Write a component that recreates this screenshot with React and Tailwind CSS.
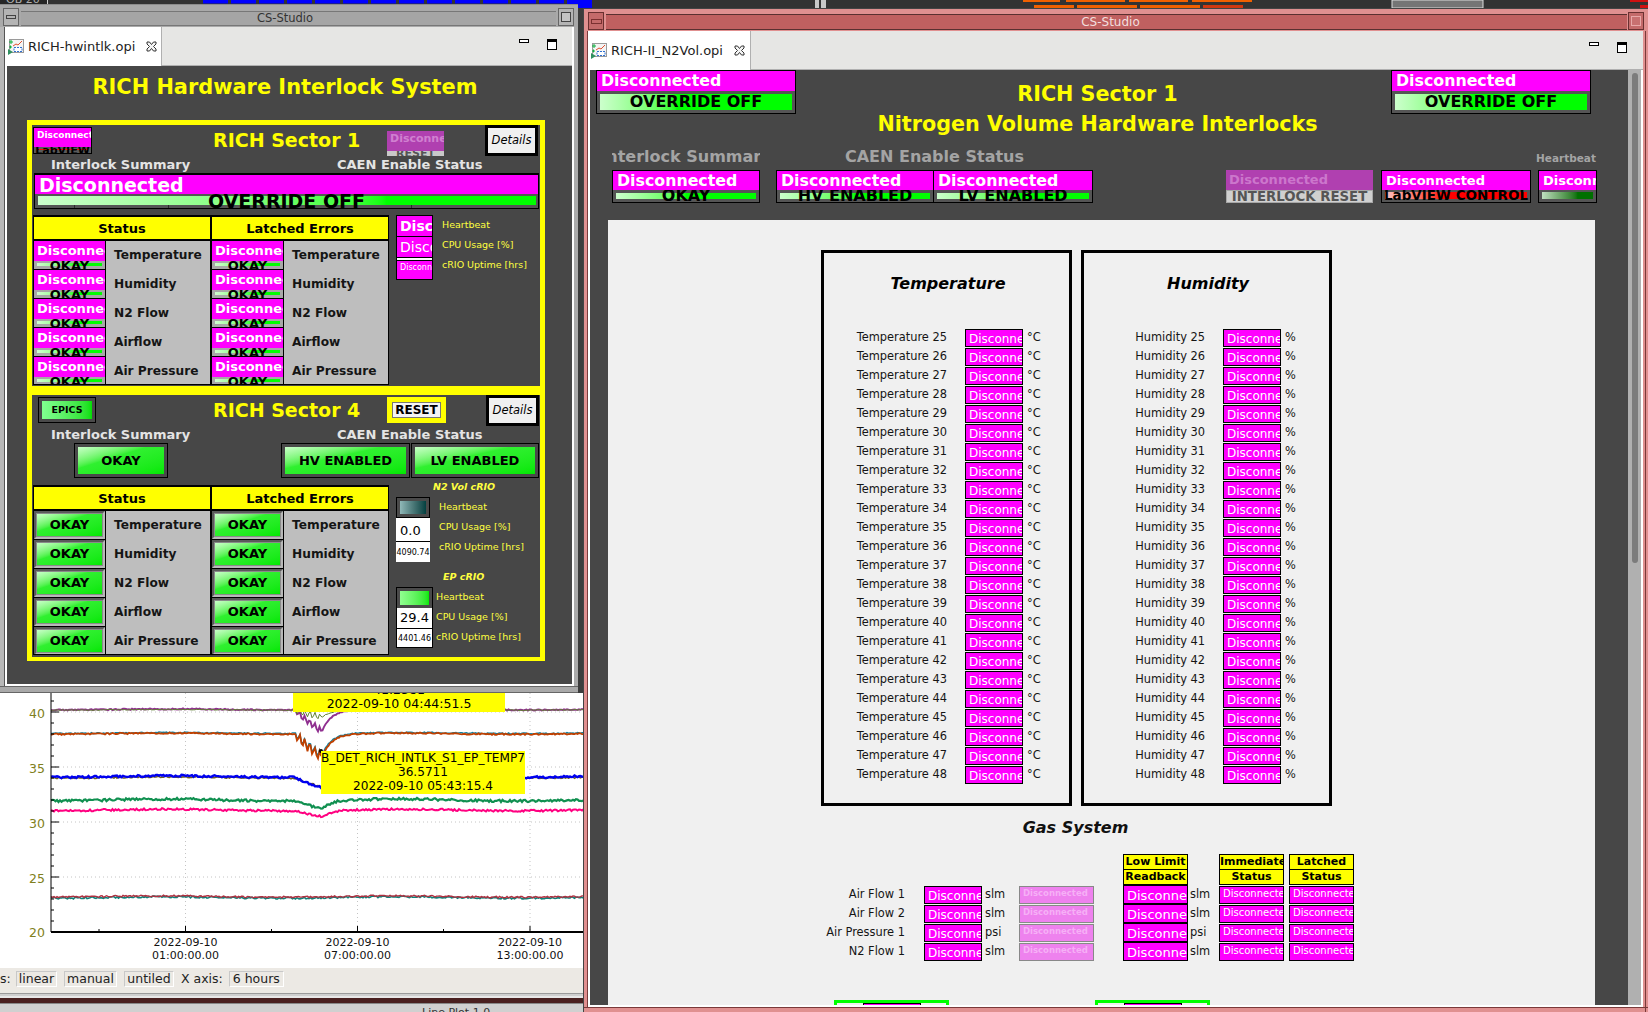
import React from 'react';

// Cropped plot of some other window peeking out above the CS-Studio windows
function TopStrip() {
    const blue = [];
    for (let x = 203; x < 560; x += 28) blue.push(x);
    return (
        <svg className="absolute left-0 top-0" width="1648" height="8" viewBox="0 0 1648 8">
            <rect x="0" y="0" width="1648" height="8" fill="#333333" />
            <rect x="0" y="0" width="47" height="8" fill="#262626" />
            <rect x="47" y="0" width="1" height="8" fill="#cfcfcf" />
            <text x="6" y="3" fontSize="11" fill="#b0b0b0" fontFamily="DejaVu Sans">OB 20</text>
            {blue.map(x => <rect key={x} x={x} y="0" width="25" height="3.5" fill="#0000ff" />)}
            <rect x="567" y="0" width="25" height="8" fill="#0000ff" />
            <rect x="815" y="0" width="4" height="8" fill="#c8c8c8" />
            <rect x="821" y="0" width="5" height="8" fill="#c8c8c8" />
            {[[1023, 37], [1066, 59], [1129, 59], [1192, 60]].map(([x, w]) => <rect key={x} x={x} y="0" width={w} height="2" fill="#f06000" />)}
            {[[1034, 40], [1077, 60], [1140, 60]].map(([x, w]) => <rect key={x} x={x} y="5" width={w} height="3" fill="#f06000" />)}
            <rect x="1203" y="5" width="40" height="3" fill="#d03810" />
            <rect x="1392" y="0" width="91" height="8" fill="#757575" stroke="#dddddd" />
            <rect x="1630" y="0" width="18" height="2" fill="#d01010" />
            <rect x="1640" y="5" width="8" height="3" fill="#d01010" />
        </svg>
    );
}

function TabIcon() {
    return (
        <svg width="16" height="16" viewBox="0 0 16 16" className="shrink-0">
            <rect x="1.5" y="0.5" width="14" height="13" fill="#f4f4f4" stroke="#9a9a9a" />
            <path d="M5 7 L8 5 L10 6 L14 2" fill="none" stroke="#e05030" strokeWidth="1" />
            <path d="M1 3 h4 M3 1 v4 M1 8 h3 M2.500 6.500 v3" stroke="#10b040" strokeWidth="1" />
            <rect x="6" y="8.500" width="8" height="4" fill="#ffffff" stroke="#3070d0" strokeDasharray="2 1" />
            <path d="M0 10 L5 13 L0 16 Z" fill="#309060" />
        </svg>
    );
}

function CloseIcon() {
    return (
        <svg width="11" height="11" viewBox="0 0 11 11" className="shrink-0">
            <path d="M1 1 H3.500 L5.500 3.500 L7.500 1 H10 V3 L7.500 5.500 L10 8 V10 H7.500 L5.500 7.500 L3.500 10 H1 V8 L3.500 5.500 L1 3 Z" fill="#f4f4f4" stroke="#333333" strokeWidth="1" />
        </svg>
    );
}

function MinMax({ minClass, maxClass }) {
    return (
        <>
            <div className={`border-[1.5px] border-black bg-white w-[10px] h-[4px] ${minClass}`} />
            <div className={`border-[1.5px] border-t-[3px] border-black bg-white w-[10px] h-[11px] ${maxClass}`} />
        </>
    );
}

// Magenta "Disconnected" label with a clipped widget underneath, as BOY draws a disconnected PV
function Status({ className, topClass, barClass, fillClass, textClass, text, label = 'Disconnected', children }) {
    return (
        <div className={`flex flex-col overflow-hidden ${className}`}>
            <div className={`overflow-hidden whitespace-nowrap ${topClass}`}>{label}</div>
            <div className={`relative flex items-center justify-center overflow-hidden ${barClass}`}>
                <div className={`absolute ${fillClass}`} />
                {children}
                <span className={`relative font-bold leading-none whitespace-nowrap ${textClass}`}>{text}</span>
            </div>
        </div>
    );
}

function GreenButton({ className, text }) {
    return (
        <div className={`flex items-center justify-center bg-[#4a4a4a] border border-black ${className}`}>
            <div className="w-full h-full bg-linear-to-br from-[#c8ffc8] via-[#30f030] via-40% to-[#00e800] flex items-center justify-center">
                <span className="font-bold text-black whitespace-nowrap text-[13px]">{text}</span>
            </div>
        </div>
    );
}

const interlocks = ['Temperature', 'Humidity', 'N2 Flow', 'Airflow', 'Air Pressure'];

function ErrorColumn({ title, disconnected }) {
    return (
        <div className="w-[176px] flex flex-col">
            <div className="h-[23px] bg-[#ffff00] border-b border-black text-center text-[13px] leading-[23px] font-bold text-black">{title}</div>
            <div className="h-px bg-black" />
            {interlocks.map((name, i) => (
                <div key={name} className={`flex bg-[#bebebe] ${i === 4 ? 'h-[27px]' : 'h-[29px]'}`}>
                    <div className="w-[72px] shrink-0 bg-black border-r border-black overflow-hidden">
                        {disconnected ? (
                            <Status
                                className="h-[28px]"
                                topClass="h-[20px] bg-[#ff00ff] text-white font-bold text-[13px] leading-[20px] pl-[3px]"
                                barClass="h-[8px] bg-[#a8a8a8]"
                                fillClass="left-[3px] right-[3px] top-[2px] h-[3px] bg-linear-to-r from-[#d0ffd0] to-[#00ff00] to-60%"
                                textClass="text-[13px] text-black"
                                text="OKAY"
                            />
                        ) : (
                            <div className="h-[28px] border-2 border-t-[#5a5a5a] border-l-[#5a5a5a] border-b-[#b8b8b8] border-r-[#b8b8b8] bg-[#8a8a8a] p-[1px]">
                                <div className="w-full h-full bg-linear-to-br from-[#c8ffc8] via-[#30f030] via-40% to-[#00e800] flex items-center justify-center">
                                    <span className="font-bold text-black text-[13px]">OKAY</span>
                                </div>
                            </div>
                        )}
                    </div>
                    <div className="pl-[8px] pt-[5px] text-[12.200px] leading-[18px] font-bold text-[#151515] whitespace-nowrap">{name}</div>
                </div>
            ))}
        </div>
    );
}

function ErrorTable({ disconnected }) {
    return (
        <div className="w-[356px] flex gap-[2px] bg-black pt-[2px] px-[1px] pb-[1px] shrink-0">
            <ErrorColumn title="Status" disconnected={disconnected} />
            <ErrorColumn title="Latched Errors" disconnected={disconnected} />
        </div>
    );
}

function DetailsButton() {
    return (
        <div className="w-[53px] h-[31px] border-[3px] border-black bg-[#f0f0f0] flex items-center justify-center text-[11.500px] italic text-black">Details</div>
    );
}

function SmallLabels({ className }) {
    return (
        <div className={`flex flex-col text-[9.500px] text-[#ffff40] whitespace-nowrap ${className}`}>
            <div className="h-[20px] leading-[20px]">Heartbeat</div>
            <div className="h-[20px] leading-[20px]">CPU Usage [%]</div>
            <div className="h-[20px] leading-[20px]">cRIO Uptime [hrs]</div>
        </div>
    );
}

function SectionHeading({ className, children }) {
    return <div className={`text-[#ffff00] text-[19px] font-bold leading-[30px] whitespace-nowrap ${className}`}>{children}</div>;
}

function SectionLabels() {
    return (
        <div className="flex h-[14px] text-[13px] leading-[16px] font-bold text-[#e4e4e4] whitespace-nowrap">
            <div className="ml-[19px] w-[286px]">Interlock Summary</div>
            <div>CAEN Enable Status</div>
        </div>
    );
}

function SectorOne() {
    return (
        <div className="h-[261px] bg-[#474747] overflow-hidden">
            <div className="flex items-start h-[32px]">
                <Status
                    className="ml-[1px] mt-[2px] w-[59px] h-[27px] border border-black"
                    topClass="h-[20px] bg-[#ff00ff] text-white font-bold text-[9px] leading-[14px] pl-[3px]"
                    barClass="h-[6px] bg-[#5a5a5a]"
                    fillClass="left-[3px] right-[3px] top-[2px] h-[1px] bg-[#ff0000]"
                    textClass="text-[11px] text-black"
                    text="LabVIEW"
                />
                <SectionHeading className="ml-[121px] w-[147px]">RICH Sector 1</SectionHeading>
                <Status
                    className="ml-[27px] mt-[6px] w-[57px] h-[25px]"
                    topClass="h-[20px] bg-[#b040b0] text-[#d080d0] font-bold text-[11px] leading-[16px] pl-[3px]"
                    barClass="h-[5px] bg-[#c8c8c8]"
                    fillClass="hidden"
                    textClass="text-[11px] text-[#555555]"
                    text="RESET"
                />
                <div className="ml-[41px]"><DetailsButton /></div>
            </div>
            <SectionLabels />
            <Status
                className="ml-[2px] mt-[2px] w-[505px] h-[36px] border border-black border-t-2"
                topClass="h-[19px] bg-[#ff00ff] text-white font-bold text-[19px] leading-[21px] pl-[4px]"
                barClass="h-[14px] bg-[#555555]"
                fillClass="left-[3px] right-[2px] top-[2px] h-[9px] bg-linear-to-r from-[#ccffcc] to-[#00ff00] to-70%"
                textClass="text-[19px] text-black"
                text="OVERRIDE OFF"
            >
                <div className="absolute left-[39px] bottom-0 h-[3px] w-px bg-[#2a2a2a]" />
                <div className="absolute left-[133px] bottom-0 h-[3px] w-px bg-[#2a2a2a]" />
                <div className="absolute left-[376px] bottom-0 h-[3px] w-px bg-[#2a2a2a]" />
            </Status>
            <div className="flex mt-[6px] ml-[1px]">
                <ErrorTable disconnected />
                <div className="ml-[7px] w-[37px] h-[65px] bg-black border border-black flex flex-col gap-px overflow-hidden">
                    <div className="h-[20px] bg-[#ff00ff] text-white font-bold text-[14px] leading-[20px] pl-[3px] overflow-hidden shrink-0">Disconnected</div>
                    <div className="h-[20px] bg-[#ff00ff] text-white text-[14px] leading-[20px] pl-[3px] overflow-hidden shrink-0">Disconnected</div>
                    <div className="h-[2px] bg-white shrink-0" />
                    <div className="h-[19px] bg-[#ff00ff] text-white text-[8px] leading-[14px] pl-[3px] overflow-hidden shrink-0">Disconnected</div>
                </div>
                <SmallLabels className="ml-[9px]" />
            </div>
        </div>
    );
}

function SectorFour() {
    return (
        <div className="h-[262px] bg-[#474747] overflow-hidden">
            <div className="flex items-start h-[32px]">
                <div className="ml-[6px] mt-[2px] w-[58px] h-[26px] bg-[#4a4a4a] border border-black p-[3px]">
                    <div className="w-full h-full bg-linear-to-r from-[#80ff90] to-[#00e000] flex items-center justify-center text-[9.500px] font-bold text-black">EPICS</div>
                </div>
                <SectionHeading className="ml-[117px] w-[147px]">RICH Sector 4</SectionHeading>
                <div className="ml-[27px] mt-[2px] w-[59px] h-[26px] bg-[#ffff00] p-[5px]">
                    <div className="w-full h-full bg-[#f4f4f4] border border-[#777777] flex items-center justify-center text-[12px] font-bold text-black">RESET</div>
                </div>
                <div className="ml-[40px]"><DetailsButton /></div>
            </div>
            <SectionLabels />
            <div className="flex mt-[2px]">
                <GreenButton className="ml-[42px] w-[94px] h-[35px] p-[3px]" text="OKAY" />
                <GreenButton className="ml-[113px] w-[129px] h-[35px] p-[3px]" text="HV ENABLED" />
                <GreenButton className="ml-[1px] w-[128px] h-[35px] p-[3px]" text="LV ENABLED" />
            </div>
            <div className="flex mt-[7px] ml-[1px]">
                <ErrorTable />
                <div className="ml-[7px] w-[110px] flex flex-col">
                    <div className="ml-[37px] h-[12px] leading-[12px] mt-[-4px] text-[9.500px] italic font-bold text-[#ffff40] whitespace-nowrap">N2 Vol cRIO</div>
                    <div className="flex mt-[4px]">
                        <div className="w-[34px] h-[65px] flex flex-col bg-white shrink-0">
                            <div className="h-[21px] bg-[#4a4a4a] border border-black p-[3px]">
                                <div className="w-full h-full bg-linear-to-r from-[#90b8b8] to-[#004040]" />
                            </div>
                            <div className="h-[23px] text-[13px] leading-[25px] pl-[4px] text-black">0.0</div>
                            <div className="h-[21px] text-[8px] leading-[21px] border-t border-black text-black text-center whitespace-nowrap overflow-hidden">4090.74</div>
                        </div>
                        <SmallLabels className="ml-[9px]" />
                    </div>
                    <div className="ml-[47px] mt-[9px] h-[12px] leading-[12px] text-[9.500px] italic font-bold text-[#ffff40] whitespace-nowrap">EP cRIO</div>
                    <div className="flex mt-[4px]">
                        <div className="w-[37px] h-[61px] flex flex-col bg-white border border-black shrink-0">
                            <div className="h-[20px] bg-[#4a4a4a] p-[3px]">
                                <div className="w-full h-full bg-linear-to-r from-[#90ff90] to-[#00e800]" />
                            </div>
                            <div className="h-[20px] text-[13px] leading-[20px] pl-[3px] text-black">29.4</div>
                            <div className="h-[19px] text-[8px] leading-[19px] border-t border-black text-black text-center whitespace-nowrap overflow-hidden">4401.46</div>
                        </div>
                        <SmallLabels className="ml-[3px]" />
                    </div>
                </div>
            </div>
        </div>
    );
}

function TitleButton({ className, inner }) {
    return (
        <div className={`flex items-center justify-center ${className}`}>
            <div className={inner} />
        </div>
    );
}

function HwInterlockWindow() {
    return (
        <div className="absolute left-0 top-[4px] w-[578px] h-[689px] bg-[#a9a9a9] border-t border-[#8c8c8c] flex flex-col">
            <div className="h-[22px] flex items-end pb-[1px] shrink-0">
                <TitleButton className="ml-[3px] w-[16px] h-[18px] bg-[#b4b4b4] border border-[#666666]" inner="w-[10px] h-[4px] border border-[#444444]" />
                <div className="ml-[2px] w-[535px] h-[15px] bg-[#a5a5a5] border-y border-[#777777] text-center text-[11.500px] leading-[13px] text-[#333333] pr-[7px]">CS-Studio</div>
                <TitleButton className="ml-[2px] w-[16px] h-[18px] bg-[#b4b4b4] border border-[#666666]" inner="w-[10px] h-[10px] border border-[#444444] bg-[#c4c4c4]" />
            </div>
            <div className="flex flex-1 min-h-0">
                <div className="w-[5px] shrink-0 bg-[#b8b8b8] border-r border-[#555555]" />
                <div className="w-[567px] flex flex-col bg-white">
                    <div className="h-[39px] flex relative bg-[#e6e6e4] border-b border-[#b0b0b0] shrink-0">
                        <div className="w-[157px] h-[39px] bg-white flex items-center pl-[3px] gap-[4px] border-r border-[#b0b0b0]">
                            <TabIcon />
                            <span className="text-[13px] text-[#222222] whitespace-nowrap">RICH-hwintlk.opi</span>
                            <span className="ml-[7px]"><CloseIcon /></span>
                        </div>
                        <MinMax minClass="absolute left-[514px] top-[12px]" maxClass="absolute left-[542px] top-[12px]" />
                    </div>
                    <div className="ml-[2px] flex-1 bg-[#474747] border-b-2 border-white flex flex-col">
                        <div className="h-[54px] text-center text-[20.900px] leading-[24px] pt-[9px] pr-[9px] font-bold text-[#ffff00] whitespace-nowrap">RICH Hardware Interlock System</div>
                        <div className="ml-[20px] w-[518px] bg-[#ffff00] pt-[5px] px-[5px] pb-[4px] flex flex-col gap-[9px]">
                            <SectorOne />
                            <SectorFour />
                        </div>
                    </div>
                </div>
                <div className="w-[6px] shrink-0 bg-[#ababab] border-l-2 border-white" />
            </div>
            <div className="h-[7px] shrink-0 bg-[#a9a9a9] border-t border-[#666666] border-b border-b-[#666666]" />
        </div>
    );
}

// deterministic noise so the picture does not change between reloads
function rnd(i) {
    const s = Math.sin(i * 12.9898) * 43758.5453;
    return s - Math.floor(s);
}

function trace(seed, base, dip, amp, jag) {
    const pts = [];
    for (let x = 51; x <= 584; x += 1.5) {
        let y = base + (rnd(x + seed) - 0.5) * amp + Math.sin((x + seed) / 37) * amp * 0.4;
        if (x > 296 && x <= 322) {
            const t = (x - 296) / 26;
            y += dip * Math.pow(t, 0.8) * 0.9 + (jag ? Math.sin((x - 296) * 1.25) * jag : 0);
        } else if (x > 322) {
            y += dip * 0.9 * Math.exp(-(x - 322) / 9);
        }
        pts.push(`${x === 51 ? 'M' : 'L'}${x} ${(y - 693).toFixed(1)}`);
    }
    return pts.join(' ');
}

const traces = [
    { d: trace(1, 709.5, 24, 1.2, 3), color: '#903090', w: 1.9 },
    { d: trace(2, 709.8, 8, 0.8, 3), color: '#608030', w: 1 },
    { d: trace(3, 733, 24, 1.2, 4), color: '#1080a0', w: 1.4 },
    { d: trace(4, 733.7, 26, 1.4, 5), color: '#c04000', w: 1.8 },
    { d: trace(5, 777.5, 10, 1.6, 0), color: '#706020', w: 1.5 },
    { d: trace(6, 776.5, 12, 2, 0), color: '#0000f0', w: 2.4 },
    { d: trace(7, 800, 9, 2.4, 0), color: '#109050', w: 2.2 },
    { d: trace(8, 810, 7, 2, 0), color: '#ff0080', w: 2 },
    { d: trace(9, 897.5, 0, 1.8, 0), color: '#108078', w: 1.6 },
    { d: trace(10, 896.5, 0, 1.6, 0), color: '#b03040', w: 1.4 },
];

function TimeChart() {
    const yTicks = [];
    for (let v = 20; v <= 41; v++) yTicks.push(v);
    const yPos = v => 239 - (v - 20) * 11;
    return (
        <svg width="583" height="275" viewBox="0 0 583 275" className="block">
            {[40, 35, 30, 25].map(v => (
                <line key={v} x1="51" x2="583" y1={yPos(v)} y2={yPos(v)} stroke="#c4c4c4" strokeDasharray="1 3" />
            ))}
            {[185.5, 357.5, 530].map(x => (
                <line key={x} x1={x} x2={x} y1="0" y2="239" stroke="#c4c4c4" strokeDasharray="1 3" />
            ))}
            {traces.map((t, i) => <path key={i} d={t.d} fill="none" stroke={t.color} strokeWidth={t.w} />)}
            <line x1="51" x2="51" y1="0" y2="239" stroke="#000000" />
            <line x1="51" x2="583" y1="239" y2="239" stroke="#000000" strokeWidth="2" />
            {yTicks.map(v => (
                <line key={v} x1="51" x2={v % 5 === 0 ? 59 : 54} y1={yPos(v)} y2={yPos(v)} stroke="#000000" />
            ))}
            {[99, 185.5, 271.5, 357.5, 443.5, 530].map((x, i) => (
                <line key={x} x1={x} x2={x} y1="239" y2={i % 2 ? 233 : 236} stroke="#000000" />
            ))}
            {[40, 35, 30, 25, 20].map(v => (
                <text key={v} x="29" y={v === 20 ? 244 : yPos(v) + 6} fontSize="12.500" fill="#808020" fontFamily="DejaVu Sans">{v}</text>
            ))}
            {[[185.5, '01:00:00.00'], [357.5, '07:00:00.00'], [530, '13:00:00.00']].map(([x, t]) => (
                <g key={x} fontSize="11" fill="#111111" fontFamily="DejaVu Sans" textAnchor="middle">
                    <text x={x} y="253">2022-09-10</text>
                    <text x={x} y="266">{t}</text>
                </g>
            ))}
            <circle cx="321" cy="58" r="2" fill="#000000" />
        </svg>
    );
}

function ToolbarBox({ className, children }) {
    return <div className={`h-[16px] border border-[#c8c8c8] border-r-white border-b-white text-center text-[12.500px] leading-[14px] text-[#222222] ${className}`}>{children}</div>;
}

function PlotWindow() {
    return (
        <div className="absolute left-0 top-[693px] w-[583px] h-[319px] bg-white overflow-hidden flex flex-col">
            <div className="relative h-[275px] shrink-0">
                <TimeChart />
                <div className="absolute left-[293px] top-[-13px] w-[212px] h-[32px] bg-[#ffff00] text-center text-[12.500px] leading-[14px] text-black pt-[3px]">
                    <div>41.2381</div>
                    <div>2022-09-10 04:44:51.5</div>
                </div>
                <div className="absolute left-[321px] top-[58px] w-[204px] h-[43px] bg-[#ffff00] text-center text-[12.100px] leading-[14px] text-black whitespace-nowrap">
                    <div>B_DET_RICH_INTLK_S1_EP_TEMP7</div>
                    <div>36.5711</div>
                    <div>2022-09-10 05:43:15.4</div>
                </div>
            </div>
            <div className="h-[25px] bg-[#ece9e4] flex items-start pt-[3px] text-[12.500px] leading-[16px] text-[#222222] shrink-0">
                <span className="w-[10px] mr-[6px] text-right overflow-hidden">s:</span>
                <ToolbarBox className="w-[41px]">linear</ToolbarBox>
                <ToolbarBox className="ml-[7px] w-[53px]">manual</ToolbarBox>
                <ToolbarBox className="ml-[7px] w-[50px]">untiled</ToolbarBox>
                <span className="ml-[7px]">X axis:</span>
                <ToolbarBox className="ml-[6px] w-[55px]">6 hours</ToolbarBox>
            </div>
            <div className="h-[3px] bg-[#cfcfcf] border-t border-[#9a9a9a] shrink-0" />
            <div className="h-[2px] bg-[#e8e8e8] shrink-0" />
            <div className="h-[5px] bg-[#4a2020] shrink-0" />
            <div className="flex-1 bg-[#d0d0d0] border-t border-[#888888] text-[11px] leading-[11px] pl-[422px] text-[#333333]">
                <div className="mt-[3px]">Line Plot 1.0</div>
            </div>
        </div>
    );
}

const magentaCell = 'bg-[#ff00ff] border border-black text-white overflow-hidden whitespace-nowrap';

function ReadbackRow({ label, labelClass, unit }) {
    return (
        <div className="flex items-center h-[19px] text-[11.400px] text-[#151515] whitespace-nowrap">
            <div className={`text-right pt-[1px] ${labelClass}`}>{label}</div>
            <div className={`ml-[18px] w-[58px] h-[18px] text-[12px] leading-[17px] pl-[3px] pt-[1px] ${magentaCell}`}>Disconnected</div>
            <div className="ml-[4px] pt-[1px]">{unit}</div>
        </div>
    );
}

function ReadbackBox({ title, name, unit, labelClass }) {
    const rows = [];
    for (let n = 25; n <= 48; n++) rows.push(n);
    return (
        <div className="w-[251px] h-[556px] border-[3px] border-black shrink-0">
            <div className="h-[75px] pt-[21px] pl-[3px] text-center text-[16px] leading-[20px] font-bold italic text-black">{title}</div>
            {rows.map(n => <ReadbackRow key={n} label={`${name} ${n}`} labelClass={labelClass} unit={unit} />)}
        </div>
    );
}

function GasHeader({ className, lines }) {
    return (
        <div className={`w-[65px] flex flex-col bg-black border border-black gap-px ${className}`}>
            {lines.map(l => (
                <div key={l} className="h-[14px] bg-[#ffff00] text-center text-[11px] leading-[14px] font-bold text-black whitespace-nowrap overflow-hidden">{l}</div>
            ))}
        </div>
    );
}

const gasRows = [['Air Flow 1', 'slm'], ['Air Flow 2', 'slm'], ['Air Pressure 1', 'psi'], ['N2 Flow 1', 'slm']];

function GasSystem() {
    return (
        <div>
            <div className="h-[48px] w-[935px] pt-[12px] text-center text-[16px] leading-[20px] font-bold italic text-[#111111]">Gas System</div>
            <div className="flex h-[31px]">
                <GasHeader className="ml-[515px]" lines={['Low Limit', 'Readback']} />
                <GasHeader className="ml-[31px]" lines={['Immediate', 'Status']} />
                <GasHeader className="ml-[5px]" lines={['Latched', 'Status']} />
            </div>
            {gasRows.map(([name, unit]) => (
                <div key={name} className="flex items-center h-[19px] text-[11.400px] text-[#151515] whitespace-nowrap">
                    <div className="w-[297px] text-right">{name}</div>
                    <div className={`ml-[19px] w-[58px] h-[18px] text-[12px] leading-[17px] pl-[3px] pt-[1px] ${magentaCell}`}>Disconnected</div>
                    <div className="w-[37px] pl-[3px]">{unit}</div>
                    <div className="w-[75px] h-[18px] bg-[#ee82ee] border border-[#888888] text-[#f6b0f6] text-[8.500px] leading-[12px] font-bold pl-[3px] overflow-hidden">Disconnected</div>
                    <div className={`ml-[29px] w-[65px] h-[19px] text-[13px] leading-[18px] pl-[3px] pt-[1px] ${magentaCell}`}>Disconnected</div>
                    <div className="w-[31px] pl-[2px]">{unit}</div>
                    <div className={`w-[65px] h-[18px] text-[10px] leading-[14px] pl-[3px] ${magentaCell}`}>Disconnected</div>
                    <div className={`ml-[5px] w-[65px] h-[18px] text-[10px] leading-[14px] pl-[3px] ${magentaCell}`}>Disconnected</div>
                </div>
            ))}
            <div className="flex mt-[39px]">
                <div className="ml-[226px] w-[115px] h-[20px] border-[3px] border-[#00ff00] flex justify-center">
                    <div className="w-[58px] h-[10px] bg-[#ff00ff] border border-black" />
                </div>
                <div className="ml-[146px] w-[115px] h-[20px] border-[3px] border-[#00ff00] flex justify-center">
                    <div className="w-[58px] h-[10px] bg-[#ff00ff] border border-black" />
                </div>
            </div>
        </div>
    );
}

const disconnectedTop = 'h-[20px] bg-[#ff00ff] text-white font-bold leading-[20px] pl-[4px]';
const smallGreen = 'left-[3px] right-[3px] top-[3px] h-[6px] bg-linear-to-r from-[#ccffcc] to-[#00ff00] to-50%';

function N2VolDisplay() {
    return (
        <div className="ml-[2px] w-[1038px] h-[935px] bg-[#474747] overflow-hidden flex flex-col shrink-0">
            <div className="flex h-[80px] shrink-0">
                <Status
                    className="ml-[6px] w-[200px] h-[44px] border border-black"
                    topClass={`${disconnectedTop} text-[15.800px]`}
                    barClass="h-[22px] bg-[#555555]"
                    fillClass="left-[3px] right-[3px] top-[3px] h-[16px] bg-linear-to-r from-[#ccffcc] to-[#00ff00] to-40%"
                    textClass="text-[16px] text-black"
                    text="OVERRIDE OFF"
                />
                <div className="w-[595px] pl-[8px] flex flex-col items-center text-[#ffff00] font-bold text-[20.700px] leading-[30px] pt-[9px] whitespace-nowrap">
                    <div>RICH Sector 1</div>
                    <div>Nitrogen Volume Hardware Interlocks</div>
                </div>
                <Status
                    className="w-[200px] h-[44px] border border-black"
                    topClass={`${disconnectedTop} text-[15.800px]`}
                    barClass="h-[22px] bg-[#555555]"
                    fillClass="left-[3px] right-[3px] top-[3px] h-[16px] bg-linear-to-r from-[#ccffcc] to-[#00ff00] to-40%"
                    textClass="text-[16px] text-black"
                    text="OVERRIDE OFF"
                />
            </div>
            <div className="flex h-[70px] shrink-0 items-start">
                <div className="ml-[22px] w-[148px] shrink-0">
                    <div className="h-[20px] overflow-hidden flex justify-center text-[16px] leading-[14px] font-bold text-[#a4a4a4] whitespace-nowrap">Interlock Summary</div>
                    <Status
                        className="h-[33px] border border-black"
                        topClass={`${disconnectedTop} text-[15.800px]`}
                        barClass="h-[12px] bg-[#555555]"
                        fillClass={smallGreen}
                        textClass="text-[16px] text-black"
                        text="OKAY"
                    />
                </div>
                <div className="ml-[16px] w-[317px] shrink-0">
                    <div className="h-[20px] flex justify-center text-[16px] leading-[14px] font-bold text-[#a4a4a4] whitespace-nowrap">CAEN Enable Status</div>
                    <div className="flex">
                        <Status
                            className="w-[158px] h-[33px] border border-black"
                            topClass={`${disconnectedTop} text-[15.800px]`}
                            barClass="h-[12px] bg-[#555555]"
                            fillClass={smallGreen}
                            textClass="text-[16px] text-black"
                            text="HV ENABLED"
                        />
                        <Status
                            className="w-[159px] h-[33px] border border-black border-l-0"
                            topClass={`${disconnectedTop} text-[15.800px]`}
                            barClass="h-[12px] bg-[#555555]"
                            fillClass={smallGreen}
                            textClass="text-[16px] text-black"
                            text="LV ENABLED"
                        />
                    </div>
                </div>
                <Status
                    className="ml-[133px] mt-[20px] w-[147px] h-[33px]"
                    topClass="h-[20px] bg-[#b040b0] text-[#cc77cc] font-bold text-[13px] leading-[20px] pl-[3px]"
                    barClass="h-[13px] bg-[#d0d0d0] border border-[#a8a8a8]"
                    fillClass="hidden"
                    textClass="text-[13.300px] text-[#555555]"
                    text="INTERLOCK RESET"
                />
                <Status
                    className="ml-[8px] mt-[20px] w-[150px] h-[33px] border border-black"
                    topClass={`${disconnectedTop} text-[13px]`}
                    barClass="h-[12px] bg-[#555555]"
                    fillClass="left-[3px] right-[3px] top-[2px] h-[7px] bg-linear-to-r from-[#ffc0c0] to-[#ff0000] to-40%"
                    textClass="text-[13.500px] text-black"
                    text="LabVIEW CONTROL"
                />
                <div className="ml-[7px] w-[59px] flex flex-col">
                    <div className="h-[20px] pt-[1px] -ml-[2px] text-[10.500px] leading-[14px] font-bold text-[#a4a4a4] whitespace-nowrap">Heartbeat</div>
                    <Status
                        className="h-[33px] border border-black"
                        topClass={`${disconnectedTop} text-[13px]`}
                        barClass="h-[12px] bg-[#555555]"
                        fillClass="left-[3px] right-[3px] top-[2px] h-[7px] bg-linear-to-r from-[#c0e0c0] to-[#007000] to-70%"
                        textClass="text-[1px]"
                        text=""
                    />
                </div>
            </div>
            <div className="ml-[18px] w-[987px] flex-1 bg-[#f0f0f0] pt-[30px] overflow-hidden">
                <div className="flex ml-[213px] gap-[9px]">
                    <ReadbackBox title="Temperature" name="Temperature" unit="°C" labelClass="w-[123px]" />
                    <ReadbackBox title="Humidity" name="Humidity" unit="%" labelClass="w-[121px]" />
                </div>
                <GasSystem />
            </div>
        </div>
    );
}

function N2VolWindow() {
    return (
        <div className="absolute left-[583px] top-[8px] w-[1065px] h-[1004px] bg-[#e09090] border-t border-l border-[#444444] flex flex-col">
            <div className="h-[22px] flex items-end pb-[1px] shrink-0">
                <TitleButton className="ml-[4px] w-[16px] h-[18px] bg-[#c46a6a] border border-[#6a3030]" inner="w-[11px] h-[5px] border border-[#7a3030]" />
                <div className="ml-[2px] w-[1021px] h-[16px] bg-[#c06060] border-y border-[#5a3030] text-center text-[12px] leading-[14px] text-[#f2dede] pr-[12px]">CS-Studio</div>
                <TitleButton className="ml-[1px] w-[16px] h-[18px] bg-[#c46a6a] border border-[#6a3030]" inner="w-[10px] h-[10px] border border-[#e8a8a8] bg-[#c87070]" />
            </div>
            <div className="flex-1 flex flex-col min-h-0 ml-[3px] mr-[5px] mb-[5px] bg-white border-l border-[#7a3a3a]">
                <div className="h-[39px] bg-[#e6e6e4] border-b border-[#b0b0b0] relative flex shrink-0">
                    <div className="w-[163px] h-[39px] bg-white flex items-center pl-[3px] gap-[4px] border-r border-[#b0b0b0]">
                        <TabIcon />
                        <span className="text-[13px] text-[#222222] whitespace-nowrap">RICH-II_N2Vol.opi</span>
                        <span className="ml-[7px]"><CloseIcon /></span>
                    </div>
                    <MinMax minClass="absolute left-[1001px] top-[11px]" maxClass="absolute left-[1029px] top-[11px]" />
                </div>
                <div className="flex">
                    <N2VolDisplay />
                    <div className="w-[13px] h-[935px] bg-[#b0b0b0] flex justify-center pt-[3px]">
                        <div className="w-[6px] h-[490px] bg-[#7c7c7c] rounded-[3px]" />
                    </div>
                </div>
            </div>
            <div className="absolute right-[2px] top-[22px] bottom-0 w-px bg-[#7a3a3a]" />
            <div className="absolute left-0 right-0 bottom-[4px] h-px bg-[#7a3a3a]" />
        </div>
    );
}

export default function App() {
    return (
        <div className="relative w-[1648px] h-[1012px] overflow-hidden bg-[#3c3c3c] font-['DejaVu_Sans',sans-serif]">
            <TopStrip />
            <HwInterlockWindow />
            <PlotWindow />
            <N2VolWindow />
        </div>
    );
}
